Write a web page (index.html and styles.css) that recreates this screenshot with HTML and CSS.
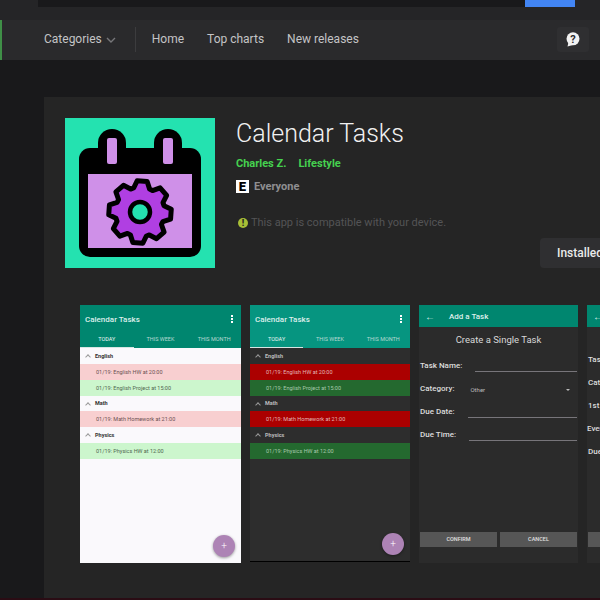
FILE: index.html
```html
<!DOCTYPE html>
<html lang="en">
<head>
    <meta charset="UTF-8">
    <title>Calendar Tasks</title>
    <link rel="stylesheet" href="styles.css">
</head>
<body>
    <header class="search-bar">
        <div class="search-input"></div>
        <div class="search-button"></div>
    </header>

    <nav class="nav">
        <span class="nav-link nav-categories">Categories</span>
        <svg class="chevron" width="10" height="6" viewBox="0 0 10 6"><path d="M1 1l4 4 4-4" fill="none" stroke="#77777a" stroke-width="1.4"/></svg>
        <span class="nav-divider"></span>
        <span class="nav-link">Home</span>
        <span class="nav-link">Top charts</span>
        <span class="nav-link">New releases</span>
        <div class="help">
            <svg width="14" height="15" viewBox="0 0 14 15">
                <circle cx="7" cy="6.800" r="6.500" fill="#f2f2f2"/>
                <path d="M2.500 10.500L1.500 14.500 7 13z" fill="#f2f2f2"/>
                <text x="7" y="10.800" class="help-mark">?</text>
            </svg>
        </div>
    </nav>

    <main class="main">
        <section class="card">
            <div class="app-head">
                <svg class="app-icon" width="150" height="150" viewBox="0 0 150 150">
                    <rect width="150" height="150" fill="#24e2b0"/>
                    <rect x="14" y="30" width="122" height="109" rx="11" fill="#000"/>
                    <rect x="33" y="11" width="28" height="50" rx="14" fill="#000"/>
                    <rect x="89" y="11" width="28" height="50" rx="14" fill="#000"/>
                    <rect x="42" y="20" width="10" height="26" rx="2" fill="#cf90e8"/>
                    <rect x="98" y="20" width="10" height="26" rx="2" fill="#cf90e8"/>
                    <rect x="23" y="56" width="104" height="74" fill="#cf90e8"/>
                    <path transform="translate(75 94) rotate(4)" fill="#b03fe2" stroke="#000" stroke-width="5" stroke-linejoin="round" d="M-8-23.500L-5-31 5-31 8-23.500 10.960-22.270 18.380-25.450 25.450-18.380 22.270-10.960 23.500-8 31-5 31 5 23.500 8 22.270 10.960 25.450 18.380 18.380 25.450 10.960 22.270 8 23.500 5 31-5 31-8 23.500-10.960 22.270-18.380 25.450-25.450 18.380-22.270 10.960-23.500 8-31 5-31-5-23.500-8-22.270-10.960-25.450-18.380-18.380-25.450-10.960-22.270z"/>
                    <circle cx="75" cy="94" r="10" fill="#24e2b0" stroke="#000" stroke-width="4.500"/>
                </svg>
                <div class="app-info">
                    <h1 class="app-title">Calendar Tasks</h1>
                    <div class="app-meta">
                        <span>Charles Z.</span>
                        <span>Lifestyle</span>
                    </div>
                    <div class="rating">
                        <span class="esrb">E</span>
                        <span>Everyone</span>
                    </div>
                    <div class="compat">
                        <span class="compat-dot">!</span>
                        <span>This app is compatible with your device.</span>
                    </div>
                    <div class="install-row">
                        <span class="install-button">Installed</span>
                    </div>
                </div>
            </div>

            <div class="shots">
                <div class="shot shot-light">
                    <div class="app-bar">
                        <div class="app-bar-top"><span>Calendar Tasks</span><span class="dots"><i></i><i></i><i></i></span></div>
                        <div class="tabs"><span class="tab-active">TODAY</span><span>THIS WEEK</span><span>THIS MONTH</span></div>
                    </div>
                    <div class="group"><span class="caret"></span>English</div>
                    <div class="task task-late">01/19: English HW at 20:00</div>
                    <div class="task task-ok">01/19: English Project at 15:00</div>
                    <div class="group"><span class="caret"></span>Math</div>
                    <div class="task task-late">01/19: Math Homework at 21:00</div>
                    <div class="group"><span class="caret"></span>Physics</div>
                    <div class="task task-ok">01/19: Physics HW at 12:00</div>
                    <span class="fab">+</span>
                </div>

                <div class="shot shot-dark">
                    <div class="app-bar">
                        <div class="app-bar-top"><span>Calendar Tasks</span><span class="dots"><i></i><i></i><i></i></span></div>
                        <div class="tabs"><span class="tab-active">TODAY</span><span>THIS WEEK</span><span>THIS MONTH</span></div>
                    </div>
                    <div class="group"><span class="caret"></span>English</div>
                    <div class="task task-late">01/19: English HW at 20:00</div>
                    <div class="task task-ok">01/19: English Project at 15:00</div>
                    <div class="group"><span class="caret"></span>Math</div>
                    <div class="task task-late">01/19: Math Homework at 21:00</div>
                    <div class="group"><span class="caret"></span>Physics</div>
                    <div class="task task-ok">01/19: Physics HW at 12:00</div>
                    <span class="fab">+</span>
                </div>

                <div class="shot shot-form">
                    <div class="form-bar"><span class="back">←</span><span>Add a Task</span></div>
                    <div class="form-title">Create a Single Task</div>
                    <div class="form-row"><label>Task Name:</label><span class="field"></span></div>
                    <div class="form-row"><label>Category:</label><span class="select">Other<span class="select-arrow"></span></span></div>
                    <div class="form-row"><label>Due Date:</label><span class="field"></span></div>
                    <div class="form-row"><label>Due Time:</label><span class="field"></span></div>
                    <div class="form-actions"><span>CONFIRM</span><span>CANCEL</span></div>
                </div>

                <div class="shot shot-form shot-cut">
                    <div class="form-bar"><span class="back">←</span></div>
                    <div class="form-title"></div>
                    <div class="form-row"><label>Task Name:</label></div>
                    <div class="form-row"><label>Category:</label></div>
                    <div class="form-row"><label>1st Date:</label></div>
                    <div class="form-row"><label class="label-wide">Every:</label></div>
                    <div class="form-row"><label>Due Time:</label></div>
                    <div class="form-actions"><span></span></div>
                </div>
            </div>
        </section>
    </main>
    <div class="bottom-line"></div>
</body>
</html>
```

FILE: styles.css
```css
* {
    box-sizing: border-box;
}

html,
body {
    height: 600px;
    margin: 0;
    overflow: hidden;
}

body {
    background-color: #19191b;
    color: #fff;
    font-family: Roboto, "Liberation Sans", sans-serif;
    width: 600px;
}

.search-bar {
    background-color: #252527;
    display: flex;
    height: 20px;
    padding-left: 38px;
}

.search-input {
    background-color: #19191b;
    height: 7px;
    width: 487px;
}

.search-button {
    background-color: #4285f4;
    height: 7px;
    width: 50px;
}

.nav {
    align-items: center;
    background-color: #2a2a2c;
    border-left: 2px solid #3f8f47;
    display: flex;
    height: 40px;
    padding: 0 11px 2px 42px;
}

.nav-link {
    color: #c4c4c6;
    font-size: 12px;
    margin-right: 23px;
}

.nav .nav-categories {
    margin-right: 4px;
}

.chevron {
    margin-top: 2px;
}

.nav-divider {
    background-color: #3c3c3e;
    height: 25px;
    margin: 0 16px 0 19px;
    width: 1px;
}

.help {
    align-items: center;
    background-color: #2f2f31;
    border-radius: 3px;
    display: flex;
    height: 25px;
    justify-content: center;
    margin-left: auto;
    width: 32px;
}

.help-mark {
    fill: #2a2a2c;
    font-size: 11px;
    font-weight: 700;
    text-anchor: middle;
}

.main {
    padding: 37px 0 0 44px;
}

.card {
    background-color: #252525;
    height: 501px;
    overflow: hidden;
    padding: 21px 0 0 21px;
    width: 556px;
}

.app-head {
    display: flex;
    gap: 21px;
}

.app-icon {
    flex: none;
}

.app-info {
    flex: 1;
}

.app-title {
    color: #f1f1f1;
    font-size: 25px;
    font-weight: 300;
    line-height: 30px;
    margin: 1px 0 0;
}

.app-meta {
    color: #45d14f;
    display: flex;
    font-size: 11px;
    font-weight: 700;
    gap: 12px;
    margin-top: 8px;
}

.rating {
    align-items: center;
    color: #8f8f91;
    display: flex;
    font-size: 11px;
    font-weight: 700;
    gap: 5px;
    margin-top: 10px;
}

.esrb {
    background-color: #fff;
    color: #000;
    font-size: 13px;
    font-weight: 900;
    height: 13px;
    line-height: 13px;
    text-align: center;
    width: 13px;
}

.compat {
    align-items: center;
    color: #545456;
    display: flex;
    font-size: 11px;
    gap: 3px;
    margin-top: 23px;
}

.compat-dot {
    background-color: #a8bf36;
    border-radius: 50%;
    color: #252525;
    font-size: 9px;
    font-weight: 900;
    height: 10px;
    line-height: 10px;
    margin-left: 2px;
    text-align: center;
    width: 10px;
}

.install-row {
    display: flex;
    justify-content: flex-end;
    margin-top: 9px;
}

.install-button {
    background-color: #2f2f31;
    border-radius: 4px;
    color: #eaeaea;
    flex: none;
    font-size: 12px;
    font-weight: 500;
    height: 30px;
    line-height: 30px;
    margin-right: -40px;
    padding-left: 17px;
    width: 100px;
}

.shots {
    display: flex;
    gap: 9px;
    margin-left: 15px;
    margin-top: 37px;
}

.shot {
    flex: none;
    height: 258px;
    position: relative;
    width: 160px;
}

.shot-light {
    background-color: #faf9fc;
    color: #333;
    width: 161px;
}

.shot-dark {
    background-color: #2d2d2d;
    border-bottom: 1px solid #000;
    color: #bbb;
    height: 257px;
}

.shot-form {
    background-color: #2b2b2b;
    color: #ddd;
    width: 159px;
}

.app-bar {
    background-color: #00866f;
    color: #dcefeb;
    height: 43px;
}

.shot-dark .app-bar {
    background-color: #069580;
}

.app-bar-top {
    align-items: center;
    display: flex;
    font-size: 8px;
    font-weight: 500;
    height: 28px;
    justify-content: space-between;
    padding: 0 8px 0 5px;
}

.dots {
    display: flex;
    flex-direction: column;
    gap: 1px;
}

.dots i {
    background-color: #fff;
    height: 2px;
    width: 2px;
}

.tabs {
    display: grid;
    font-size: 5.500px;
    grid-template-columns: 1fr 1fr 1fr;
    height: 15px;
    text-align: center;
}

.tabs span {
    color: #b5d8d1;
    line-height: 12px;
}

.tabs .tab-active {
    border-bottom: 1px solid #d6e6e3;
    color: #e8f4f1;
}

.group {
    align-items: center;
    display: flex;
    font-size: 5.500px;
    font-weight: 700;
    height: 15.500px;
    padding-left: 15px;
    position: relative;
}

.caret {
    border-left: 1px solid #999;
    border-top: 1px solid #999;
    height: 4px;
    left: 6px;
    position: absolute;
    top: 7px;
    transform: rotate(45deg);
    width: 4px;
}

.task {
    align-items: center;
    display: flex;
    font-size: 5.500px;
    height: 16px;
    padding-left: 16px;
}

.task-late {
    background-color: #f8cfd0;
    color: #6b5052;
}

.task-ok {
    background-color: #ccf6cd;
    color: #4f6650;
}

.shot-dark .task-late {
    background-color: #ab0000;
    color: #e3b6b6;
}

.shot-dark .task-ok {
    background-color: #24692f;
    color: #a9c9ad;
}

.fab {
    background-color: #ad83b5;
    border-radius: 50%;
    bottom: 6px;
    box-shadow: 0 1px 3px rgba(0, 0, 0, 0.4);
    color: #fff;
    font-size: 10px;
    font-weight: 300;
    height: 22px;
    line-height: 21px;
    position: absolute;
    right: 6px;
    text-align: center;
    width: 22px;
}

.form-bar {
    align-items: center;
    background-color: #00866f;
    color: #dcefeb;
    display: flex;
    font-size: 8px;
    font-weight: 500;
    height: 22px;
    padding-left: 6px;
}

.back {
    font-size: 10px;
    margin-right: 14px;
}

.form-title {
    color: #d8d8d8;
    font-size: 9.500px;
    height: 25px;
    line-height: 24px;
    margin-top: 1px;
    text-align: center;
}

.shot-cut .form-title {
    height: 19px;
}

.form-row {
    align-items: flex-end;
    display: flex;
    font-size: 8px;
    font-weight: 500;
    gap: 13px;
    height: 23px;
    padding: 0 1px;
}

.form-row label {
    flex: none;
    line-height: 15px;
    padding-bottom: 3px;
}

.form-row .label-wide {
    margin-left: -1px;
}

.field {
    border-bottom: 1px solid #77757a;
    flex: 1;
    height: 10px;
    margin-bottom: 4px;
}

.select {
    align-items: center;
    color: #bbb;
    display: flex;
    flex: 1;
    font-size: 6px;
    font-weight: 400;
    justify-content: space-between;
    padding: 0 7px 6px 3px;
}

.select-arrow {
    border-left: 2px solid transparent;
    border-right: 2px solid transparent;
    border-top: 2px solid #bbb;
}

.form-actions {
    bottom: 16px;
    display: flex;
    font-size: 5.500px;
    gap: 3px;
    left: 1px;
    position: absolute;
    right: 1px;
}

.form-actions span {
    background-color: #565656;
    color: #e0e0e0;
    flex: 1;
    font-weight: 500;
    height: 15px;
    line-height: 15px;
    text-align: center;
}

.bottom-line {
    background-color: #2a0c14;
    height: 2px;
}
```
